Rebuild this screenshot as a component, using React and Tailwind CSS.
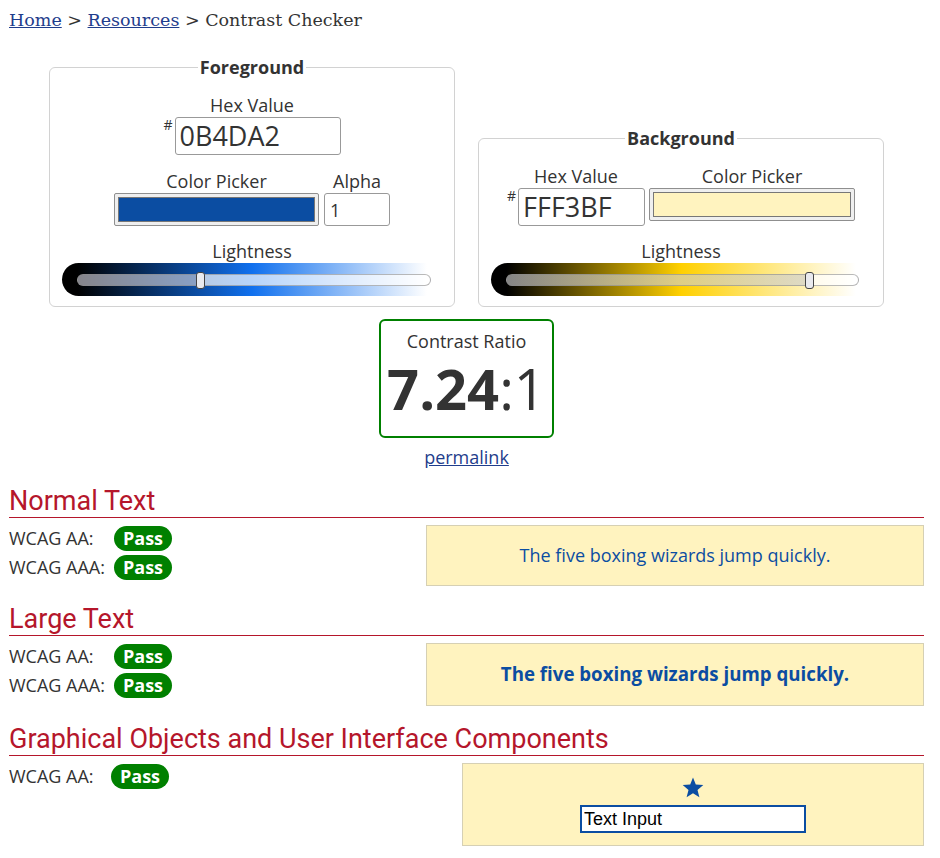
import React from 'react';

function Pass() {
  return (
    <span className="flex h-[25px] w-[58px] items-center justify-center rounded-full bg-[#008000] text-[18px] font-bold text-white">
      Pass
    </span>
  );
}

function Row({ label, w = 'w-[105px]' }) {
  return (
    <div className="flex h-[25px] items-center">
      <span className={`${w} text-[18px] text-[#333]`}>{label}</span>
      <Pass />
    </div>
  );
}

function Label({ children, className = '' }) {
  return <div className={`text-center text-[18px] leading-[22px] text-[#333] ${className}`}>{children}</div>;
}

function Swatch({ className }) {
  return (
    <div className="h-[33px] rounded-[2px] border border-[#8f8f8f] bg-[#efefef] p-[3px]">
      <div className={`h-full w-full border border-[#777] ${className}`} />
    </div>
  );
}

function HexInput({ value, w }) {
  return (
    <div className="flex items-start">
      <span className="mr-[2px] mt-[1px] text-[14px] leading-none text-[#333]">#</span>
      <input
        defaultValue={value}
        className={`${w} h-[38px] rounded-[3px] border border-[#999] bg-white px-[4px] text-[27px] text-[#333] outline-none`}
      />
    </div>
  );
}

export default function App() {
  return (
    <div className="w-[940px] pl-[9px] pr-[16px] pt-[8px] pb-[20px] font-['Open_Sans',sans-serif] text-[#333]">
      <nav className="font-['DejaVu_Serif',serif] text-[17.5px] leading-[24px] text-[#333]">
        <a href="#" className="text-[#1f3d8c] underline">Home</a>
        {' > '}
        <a href="#" className="text-[#1f3d8c] underline">Resources</a>
        {' > Contrast Checker'}
      </nav>

      <div className="mt-[24px] flex items-end justify-center gap-[23px]">
        <fieldset className="w-[406px] rounded-md border border-[#d2d2d2] px-[10px] pt-[16px] pb-[10px]">
          <legend className="mx-auto px-[2px] text-[18px] font-bold leading-[22px]">Foreground</legend>
          <Label>Hex Value</Label>
          <div className="mt-px flex justify-center">
            <HexInput value="0B4DA2" w="w-[166px]" />
          </div>
          <div className="mt-[15px] flex justify-center gap-[5px]">
            <div className="w-[205px]">
              <Label>Color Picker</Label>
              <div className="mt-px">
                <Swatch className="bg-[#0B4DA2]" />
              </div>
            </div>
            <div className="w-[66px]">
              <Label>Alpha</Label>
              <input
                defaultValue="1"
                className="mt-px h-[33px] w-[66px] rounded-[3px] border border-[#999] bg-white px-[5px] text-[18px] text-[#333] outline-none"
              />
            </div>
          </div>
          <Label className="mt-[14px]">Lightness</Label>
          <div className="relative mx-auto mt-px h-[33px] w-[380px] rounded-l-full bg-[linear-gradient(to_right,#000_4%,#1070ee_50%,#fff_96%)]">
            <div className="absolute top-[11px] left-[15px] h-[12px] w-[354px] rounded-full border border-[#8a8a8a]/60 bg-[linear-gradient(to_right,rgba(205,205,215,0.65)_35%,rgba(255,255,255,0.7)_35%)]" />
            <div className="absolute top-[9px] left-[134px] h-[17px] w-[9px] rounded-[3px] border-[1.5px] border-[#444] bg-[#e9eaee]" />
          </div>
        </fieldset>

        <fieldset className="w-[406px] rounded-md border border-[#d2d2d2] px-[10px] pt-[16px] pb-[10px]">
          <legend className="mx-auto px-[2px] text-[18px] font-bold leading-[22px]">Background</legend>
          <div className="flex justify-center gap-[4px]">
            <div>
              <Label>Hex Value</Label>
              <div className="mt-px">
                <HexInput value="FFF3BF" w="w-[127px]" />
              </div>
            </div>
            <div className="w-[206px]">
              <Label>Color Picker</Label>
              <div className="mt-px">
                <Swatch className="bg-[#FFF3BF]" />
              </div>
            </div>
          </div>
          <Label className="mt-[14px]">Lightness</Label>
          <div className="relative mx-auto mt-px h-[33px] w-[380px] rounded-l-full bg-[linear-gradient(to_right,#000_4%,#ffd000_50%,#fff_96%)]">
            <div className="absolute top-[11px] left-[15px] h-[12px] w-[353px] rounded-full border border-[#8a8a8a]/60 bg-[linear-gradient(to_right,rgba(205,205,205,0.65)_86%,rgba(255,255,255,0.7)_86%)]" />
            <div className="absolute top-[9px] left-[314px] h-[17px] w-[9px] rounded-[3px] border-[1.5px] border-[#444] bg-[#e9eaee]" />
          </div>
        </fieldset>
      </div>

      <div className="mt-[12px] flex flex-col items-center">
        <div className="flex h-[119px] w-[175px] flex-col items-center rounded-md border-2 border-[#008000] pt-[9px]">
          <div className="text-[18px] leading-[22px]">Contrast Ratio</div>
          <div className="mt-[10px] text-[56px] leading-[52px] text-[#333]">
            <span className="font-bold">7.24</span>:1
          </div>
        </div>
        <a href="#" className="mt-[7px] text-[18px] leading-[24px] text-[#1f3d8c] underline">permalink</a>
      </div>

      <h2 className="mt-[16px] border-b border-[#b5162b] font-['Roboto',sans-serif] text-[27px] leading-[32px] text-[#b5162b]">
        Normal Text
      </h2>
      <div className="mt-[7px] flex">
        <div className="flex w-[417px] flex-col gap-[4px] pt-px">
          <Row label="WCAG AA:" />
          <Row label="WCAG AAA:" />
        </div>
        <div className="flex h-[61px] flex-1 items-center justify-center border border-[#d6d0b4] bg-[#FFF3BF] text-[18px] text-[#0B4DA2]">
          The five boxing wizards jump quickly.
        </div>
      </div>

      <h2 className="mt-[17px] border-b border-[#b5162b] font-['Roboto',sans-serif] text-[27px] leading-[32px] text-[#b5162b]">
        Large Text
      </h2>
      <div className="mt-[7px] flex">
        <div className="flex w-[417px] flex-col gap-[4px] pt-px">
          <Row label="WCAG AA:" />
          <Row label="WCAG AAA:" />
        </div>
        <div className="flex h-[63px] flex-1 items-center justify-center border border-[#d6d0b4] bg-[#FFF3BF] text-[18.7px] font-bold text-[#0B4DA2]">
          The five boxing wizards jump quickly.
        </div>
      </div>

      <h2 className="mt-[17px] border-b border-[#b5162b] font-['Roboto',sans-serif] text-[27px] leading-[32px] text-[#b5162b]">
        Graphical Objects and User Interface Components
      </h2>
      <div className="mt-[7px] flex">
        <div className="w-[453px] pt-px">
          <Row label="WCAG AA:" w="w-[102px]" />
        </div>
        <div className="flex h-[83px] flex-1 flex-col items-center border border-[#d6d0b4] bg-[#FFF3BF] pt-[12px]">
          <svg width="24" height="24" viewBox="0 0 24 24" aria-hidden="true">
            <polygon
              points="12,1.5 14.8,8.6 22.3,9.1 16.5,13.9 18.4,21.3 12,17.2 5.6,21.3 7.5,13.9 1.7,9.1 9.2,8.6"
              fill="#0B4DA2"
            />
          </svg>
          <input
            defaultValue="Text Input"
            className="mt-[5px] h-[28px] w-[226px] border-2 border-[#0B4DA2] bg-white px-[2px] font-['Liberation_Sans',Arial,sans-serif] text-[18px] text-black outline-none"
          />
        </div>
      </div>
    </div>
  );
}
